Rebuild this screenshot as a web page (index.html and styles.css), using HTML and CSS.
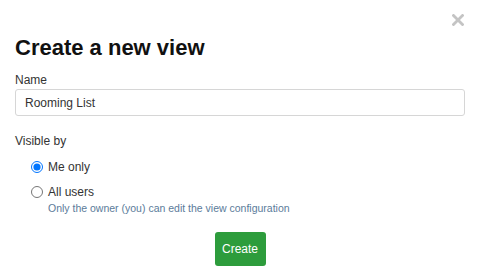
FILE: index.html
```html
<!DOCTYPE html>
<html lang="en">
<head>
  <meta charset="UTF-8">
  <meta name="viewport" content="width=device-width, initial-scale=1.0">
  <title>Create a new view</title>
  <link rel="stylesheet" href="styles.css">
</head>
<body>

<div class="modal">
  <button class="close-btn" aria-label="Close">
    <svg width="12" height="12" viewBox="0 0 12 12">
      <path d="M1.5 1.5 L10.5 10.5 M10.5 1.5 L1.5 10.5" stroke="#c4c4c4" stroke-width="2.8" stroke-linecap="square"/>
    </svg>
  </button>

  <h2 class="modal-title">Create a new view</h2>

  <label class="field-label" for="view-name">Name</label>
  <input class="text-input" id="view-name" type="text" value="Rooming List">

  <div class="field-label visible-label">Visible by</div>
  <div class="radio-group">
    <label class="radio-row">
      <input type="radio" name="visible" checked>
      <span>Me only</span>
    </label>
    <label class="radio-row">
      <input type="radio" name="visible">
      <span>All users</span>
    </label>
    <div class="hint">Only the owner (you) can edit the view configuration</div>
  </div>

  <div class="actions">
    <button class="create-btn">Create</button>
  </div>
</div>

</body>
</html>
```

FILE: styles.css
```css
body {
  margin: 0;
  background: #fff;
  font-family: "Liberation Sans", Arial, sans-serif;
  color: #333;
}

.modal {
  position: relative;
  padding: 35px 14px 0 15px;
}

/* Close cross in the top right corner */
.close-btn {
  position: absolute;
  top: 14px;
  right: 15px;
  border: none;
  background: none;
  padding: 0;
  width: 12px;
  height: 12px;
  cursor: pointer;
}

.close-btn svg {
  display: block;
}

.modal-title {
  margin: 0 0 11px;
  font-size: 22px;
  line-height: 26px;
  font-weight: bold;
  color: #111;
}

.field-label {
  display: block;
  font-size: 12px;
  line-height: 16px;
  color: #333;
}

.text-input {
  display: block;
  box-sizing: border-box;
  width: 100%;
  height: 27px;
  margin-top: 1px;
  padding: 0 9px;
  border: 1px solid #d6d6d6;
  border-radius: 3px;
  font-family: inherit;
  font-size: 12px;
  color: #333;
}

.visible-label {
  margin-top: 17px;
}

.radio-group {
  padding-left: 16px;
  margin-top: 10px;
}

.radio-row {
  display: flex;
  align-items: center;
  height: 16px;
  font-size: 12px;
  color: #333;
}

.radio-row + .radio-row {
  margin-top: 9px;
}

.radio-row input {
  margin: 0 5px 0 0;
  width: 12px;
  height: 12px;
}

.hint {
  margin-top: 2px;
  padding-left: 17px;
  font-size: 10.5px;
  line-height: 13px;
  color: #5b7b9a;
}

.actions {
  display: flex;
  justify-content: center;
  margin-top: 17px;
}

.create-btn {
  width: 51px;
  height: 34px;
  border: none;
  border-radius: 3px;
  background: #2d9c3c;
  color: #fff;
  font-family: inherit;
  font-size: 12px;
  cursor: pointer;
}
```
